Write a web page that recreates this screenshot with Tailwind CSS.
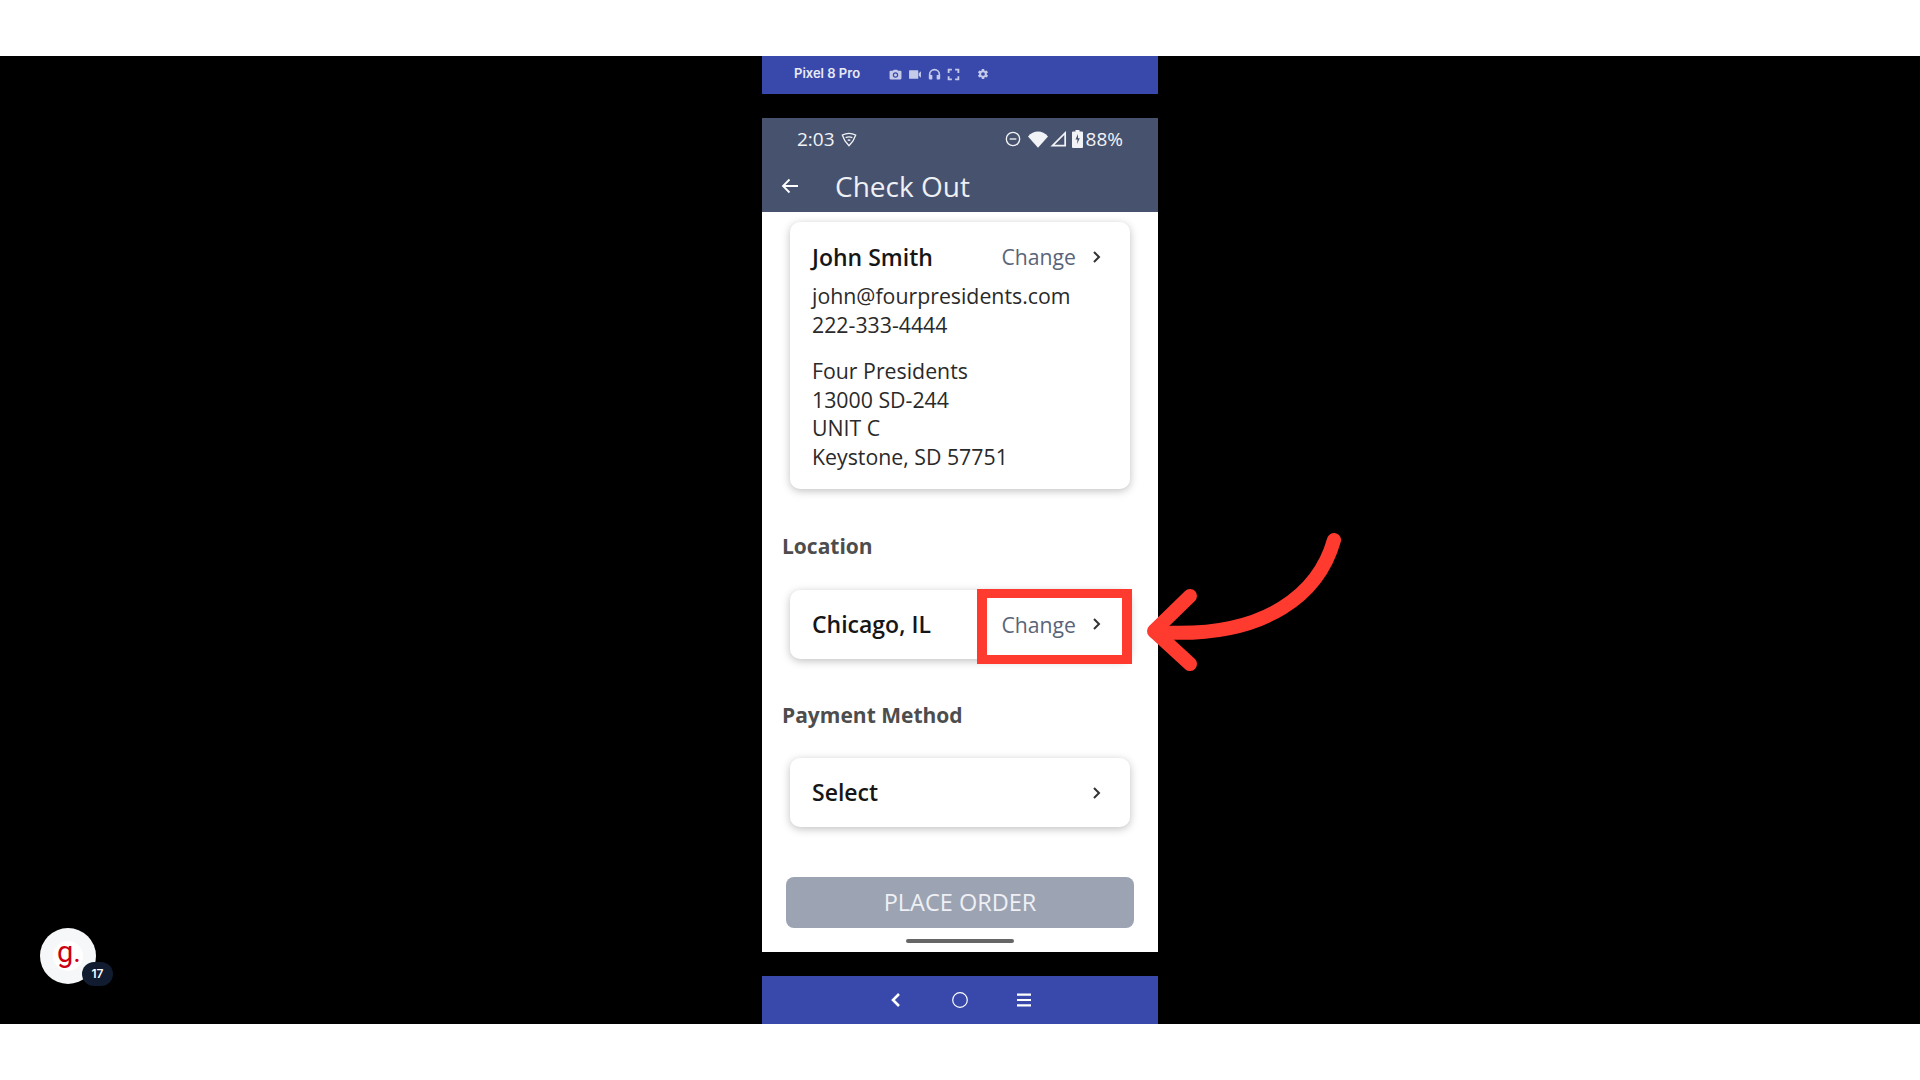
<!DOCTYPE html>
<html lang="en">
<head>
  <meta charset="UTF-8">
  <title>Check Out</title>
  <script src="https://cdn.jsdelivr.net/npm/@tailwindcss/browser@4"></script>
</head>
<body class="bg-white font-['Open_Sans',sans-serif]">
  <div class="relative flex flex-col w-[1920px] h-[1080px] overflow-hidden">
    <div class="h-14 bg-white"></div>

    <!-- Black stage with the phone -->
    <div class="h-[968px] bg-black flex justify-center">
      <div class="w-[396px] flex flex-col">
        <!-- Emulator top bar -->
        <div class="h-[38px] bg-[#3949ab] flex items-center pl-[32px] text-[#c5cae9]">
          <span class="font-['Inter',sans-serif] font-semibold text-[13px] text-[#e8eaf6] w-[95px] -mt-[2px]">Pixel 8 Pro</span>
          <div class="flex items-center gap-[6px] -mt-[2px]">
            <svg class="w-[13px] h-[13px]" viewBox="0 0 24 24" fill="currentColor"><path d="M9 3 7.2 5H3a2 2 0 0 0-2 2v12a2 2 0 0 0 2 2h18a2 2 0 0 0 2-2V7a2 2 0 0 0-2-2h-4.2L15 3H9zm3 15a5 5 0 1 1 0-10 5 5 0 0 1 0 10zm0-2.2a2.8 2.8 0 1 0 0-5.6 2.8 2.8 0 0 0 0 5.6z"/></svg>
            <svg class="w-[14px] h-[13px]" viewBox="0 0 24 24" fill="currentColor"><path d="M2 4h15a1 1 0 0 1 1 1v14a1 1 0 0 1-1 1H2a1 1 0 0 1-1-1V5a1 1 0 0 1 1-1zm17 5.5 4-3.5v12l-4-3.5v-5z"/></svg>
            <svg class="w-[13px] h-[13px]" viewBox="0 0 24 24" fill="none" stroke="currentColor" stroke-width="3"><path d="M3 20v-8a9 9 0 0 1 18 0v8"/><rect x="2" y="13" width="6" height="8" rx="1" fill="currentColor" stroke="none"/><rect x="16" y="13" width="6" height="8" rx="1" fill="currentColor" stroke="none"/></svg>
            <svg class="w-[13px] h-[13px]" viewBox="0 0 24 24" fill="none" stroke="currentColor" stroke-width="3.4"><path d="M3 9V3h6M15 3h6v6M21 15v6h-6M9 21H3v-6"/></svg>
            <svg class="w-[14px] h-[14px] ml-[10px]" viewBox="0 0 24 24" fill="currentColor"><path d="M19.4 13a7.6 7.6 0 0 0 0-2l2.1-1.6-2-3.5-2.5 1a7.4 7.4 0 0 0-1.7-1L15 3.3h-4l-.4 2.6a7.4 7.4 0 0 0-1.7 1l-2.5-1-2 3.5L6.5 11a7.6 7.6 0 0 0 0 2l-2.1 1.6 2 3.5 2.5-1c.5.4 1.1.7 1.7 1l.4 2.6h4l.4-2.6c.6-.3 1.2-.6 1.7-1l2.5 1 2-3.5L19.4 13zM13 15.2a3.2 3.2 0 1 1 0-6.4 3.2 3.2 0 0 1 0 6.4z" transform="translate(-1 0)"/></svg>
          </div>
        </div>

        <div class="h-[24px]"></div>

        <!-- App header -->
        <div class="h-[94px] bg-[#47526e] text-white">
          <div class="h-[42px] pl-[35px] pr-[35px] flex items-center justify-between text-[19px] text-[#f2f3f6]">
            <div class="flex items-center gap-[6px]">
              <span>2:03</span>
              <svg class="w-[16px] h-[16px]" viewBox="0 0 24 24" fill="none" stroke="currentColor" stroke-width="2"><path d="M2 6c6-3 14-3 20 0l-4 9-6 7-6-7-4-9z"/><path d="M7 10c3-1.500 7-1.500 10 0M10 14c1.500-.7 2.500-.7 4 0"/></svg>
            </div>
            <div class="flex items-center">
              <svg class="w-[16px] h-[16px] mr-[7px]" viewBox="0 0 24 24" fill="none" stroke="currentColor" stroke-width="2"><circle cx="12" cy="12" r="10"/><path d="M7 12h10"/></svg>
              <svg class="w-[20px] h-[17px] mr-[2px]" viewBox="0 0 24 20" fill="currentColor"><path d="M0 6.500C6.500-1.500 17.500-1.500 24 6.500L12 20 0 6.500z"/></svg>
              <svg class="w-[17px] h-[16px] mr-[5px]" viewBox="0 0 24 24" fill="none" stroke="currentColor" stroke-width="2.600"><path d="M22 3v19H3L22 3z"/></svg>
              <svg class="w-[11px] h-[18px] mr-[3px]" viewBox="0 0 11 18" fill="currentColor"><path d="M3.500 0h4v1.500H10a1 1 0 0 1 1 1V17a1 1 0 0 1-1 1H1a1 1 0 0 1-1-1V2.500a1 1 0 0 1 1-1h2.500V0z"/><path d="M6 4 3.500 9.500h2L5 14l2.800-5.800H6L6 4z" fill="#47526e"/></svg>
              <span>88%</span>
            </div>
          </div>
          <div class="h-[52px] flex items-center">
            <svg class="w-[20px] h-[20px] ml-[18px]" viewBox="0 0 20 20" fill="none" stroke="currentColor" stroke-width="1.800"><path d="M18 10H3M9.500 3.500 3 10l6.500 6.500"/></svg>
            <span class="ml-[35px] text-[28px] leading-none text-[#eef0f4]">Check Out</span>
          </div>
        </div>

        <!-- Screen content -->
        <div class="h-[740px] bg-white flex flex-col">
          <div class="mt-[10px] mx-[28px] h-[267px] bg-white rounded-[10px] shadow-[0_2px_8px_rgba(0,0,0,0.25)] pl-[22px] pr-[27px] pt-[15px] text-[#2a2a2a] text-[21.300px]">
            <div class="h-[40px] flex items-center justify-between">
              <span class="font-semibold text-[23px] text-[#161616]">John Smith</span>
              <div class="flex items-center text-[#5a6478] text-[21.200px]">
                <span>Change</span>
                <svg class="w-[12px] h-[14px] ml-[15px]" viewBox="0 0 12 14" fill="none" stroke="#333" stroke-width="2"><path d="M3 2l5 5-5 5"/></svg>
              </div>
            </div>
            <div class="mt-[4px] leading-[29px]">
              <div>john@fourpresidents.com</div>
              <div>222-333-4444</div>
            </div>
            <div class="mt-[18px] leading-[28.5px]">
              <div>Four Presidents</div>
              <div>13000 SD-244</div>
              <div>UNIT C</div>
              <div>Keystone, SD 57751</div>
            </div>
          </div>

          <div class="mt-[45px] ml-[20px] h-[24px] leading-[24px] font-bold text-[21px] text-[#4d4d4d]">Location</div>

          <div class="relative mt-[32px] mx-[28px] h-[69px] bg-white rounded-[10px] shadow-[0_2px_8px_rgba(0,0,0,0.25)] pl-[22px] pr-[27px] flex items-center justify-between">
            <span class="font-semibold text-[23px] text-[#161616]">Chicago, IL</span>
            <div class="flex items-center text-[#5a6478] text-[21.200px]">
              <span>Change</span>
              <svg class="w-[12px] h-[14px] ml-[15px]" viewBox="0 0 12 14" fill="none" stroke="#333" stroke-width="2"><path d="M3 2l5 5-5 5"/></svg>
            </div>
            <!-- Red highlight -->
            <div class="absolute left-[187px] -top-[1px] w-[155px] h-[75px] border-x-[10px] border-y-[9px] border-[#ff3b30]"></div>
          </div>

          <div class="mt-[44px] ml-[20px] h-[24px] leading-[24px] font-bold text-[21px] text-[#4d4d4d]">Payment Method</div>

          <div class="mt-[31px] mx-[28px] h-[69px] bg-white rounded-[10px] shadow-[0_2px_8px_rgba(0,0,0,0.25)] pl-[22px] pr-[27px] flex items-center justify-between">
            <span class="font-semibold text-[23px] text-[#161616]">Select</span>
            <svg class="w-[12px] h-[14px]" viewBox="0 0 12 14" fill="none" stroke="#333" stroke-width="2"><path d="M3 2l5 5-5 5"/></svg>
          </div>

          <div class="mt-[50px] mx-[24px] h-[51px] rounded-[8px] bg-[#9ca3b3] flex items-center justify-center text-[23.500px] text-[#eef0f4]">PLACE ORDER</div>

          <div class="mt-[11px] mx-auto w-[108px] h-[4px] rounded-full bg-[#666]"></div>
        </div>

        <div class="h-[24px]"></div>

        <!-- Emulator bottom bar -->
        <div class="h-[48px] bg-[#3949ab] flex items-center justify-center gap-[48px] text-white">
          <svg class="w-[16px] h-[16px]" viewBox="0 0 16 16" fill="none" stroke="currentColor" stroke-width="2.600"><path d="M11 2 5 8l6 6"/></svg>
          <svg class="w-[16px] h-[16px]" viewBox="0 0 16 16" fill="none" stroke="currentColor" stroke-width="1.200"><circle cx="8" cy="8" r="7.300"/></svg>
          <svg class="w-[16px] h-[16px]" viewBox="0 0 16 16" fill="currentColor"><path d="M1 1.500h14v2.200H1zM1 6.900h14v2.200H1zM1 12.300h14v2.200H1z"/></svg>
        </div>
      </div>
    </div>

    <div class="h-14 bg-white"></div>

    <!-- Annotation arrow -->
    <svg class="absolute left-0 top-0 w-[1920px] h-[1080px] pointer-events-none" viewBox="0 0 1920 1080" fill="none" stroke="#ff3b30" stroke-width="14" stroke-linecap="round" stroke-linejoin="round">
      <path d="M1334 540C1320 590 1270 640 1155 632"/>
      <path d="M1190 596 1154 631 1190 664"/>
    </svg>

    <!-- Guide badge -->
    <div class="absolute left-[40px] top-[928px] w-[56px] h-[56px] rounded-full bg-[#f6f7f9] flex items-center justify-center">
      <div class="w-[30px] h-[30px] rounded-full bg-white flex items-center justify-center">
        <span class="font-['Roboto',sans-serif] font-normal text-[#cc0011] text-[29px] leading-none -mt-[8px] ml-[2px]">g.</span>
      </div>
      <div class="absolute left-[42px] top-[34px] w-[31px] h-[24px] rounded-full bg-[#111c30] text-white text-[12px] font-semibold font-['Inter',sans-serif] flex items-center justify-center">17</div>
    </div>
  </div>
</body>
</html>
